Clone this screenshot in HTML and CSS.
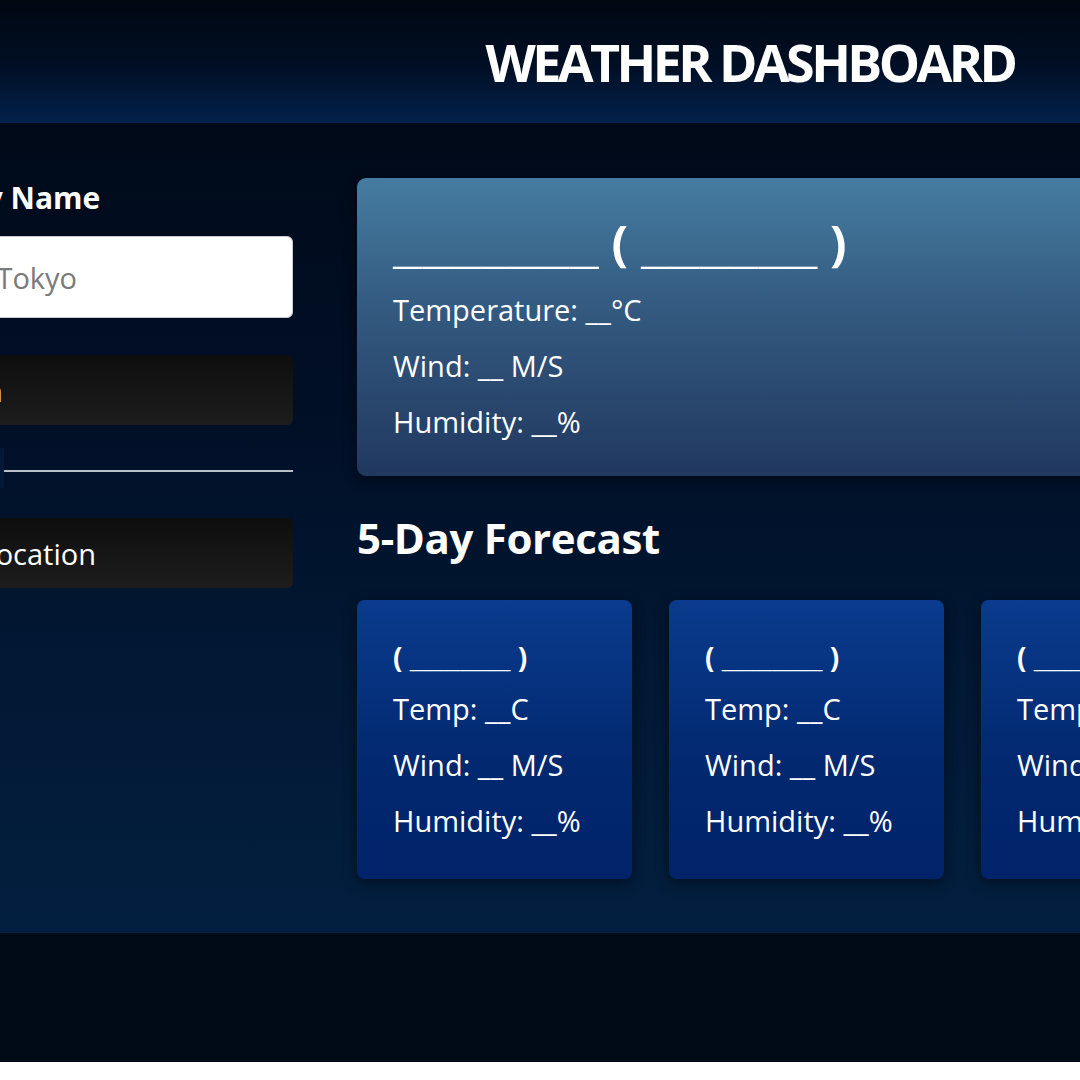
FILE: index.html
```html
<!DOCTYPE html>
<html lang="en">
<head>
<meta charset="utf-8">
<title>Weather Dashboard</title>
<link rel="stylesheet" href="styles.css">
</head>
<body>
<div class="screen">
  <header class="top-bar">
    <h1 class="title">WEATHER DASHBOARD</h1>
  </header>
  <main class="container">
    <aside class="weather-input">
      <h3 class="input-label">Enter a City Name</h3>
      <input class="city-input" type="text" placeholder="E.g., New York, London, Tokyo">
      <button class="btn search-btn">Search</button>
      <div class="separator"><span class="separator-text">or</span></div>
      <button class="btn location-btn">Use Current Location</button>
    </aside>
    <section class="weather-data">
      <div class="current-weather">
        <h2 class="city-title"><span class="blank">_______</span> ( <span class="blank">______</span> )</h2>
        <h6 class="stat stat-first">Temperature: __°C</h6>
        <h6 class="stat">Wind: __ M/S</h6>
        <h6 class="stat">Humidity: __%</h6>
      </div>
      <div class="days-forecast">
        <h2 class="forecast-title">5-Day Forecast</h2>
        <ul class="weather-cards">
          <li class="card">
            <h3 class="card-date">( <span class="blank-sm">______</span> )</h3>
            <h6 class="stat stat-card-first">Temp: __C</h6>
            <h6 class="stat">Wind: __ M/S</h6>
            <h6 class="stat">Humidity: __%</h6>
          </li>
          <li class="card">
            <h3 class="card-date">( <span class="blank-sm">______</span> )</h3>
            <h6 class="stat stat-card-first">Temp: __C</h6>
            <h6 class="stat">Wind: __ M/S</h6>
            <h6 class="stat">Humidity: __%</h6>
          </li>
          <li class="card">
            <h3 class="card-date">( <span class="blank-sm">______</span> )</h3>
            <h6 class="stat stat-card-first">Temp: __C</h6>
            <h6 class="stat">Wind: __ M/S</h6>
            <h6 class="stat">Humidity: __%</h6>
          </li>
          <li class="card">
            <h3 class="card-date">( <span class="blank-sm">______</span> )</h3>
            <h6 class="stat stat-card-first">Temp: __C</h6>
            <h6 class="stat">Wind: __ M/S</h6>
            <h6 class="stat">Humidity: __%</h6>
          </li>
          <li class="card">
            <h3 class="card-date">( <span class="blank-sm">______</span> )</h3>
            <h6 class="stat stat-card-first">Temp: __C</h6>
            <h6 class="stat">Wind: __ M/S</h6>
            <h6 class="stat">Humidity: __%</h6>
          </li>
        </ul>
      </div>
    </section>
  </main>
  <footer class="bottom-bar"></footer>
</div>
</body>
</html>
```
FILE: styles.css
```css
html, body {
  margin: 0;
  padding: 0;
  overflow: hidden;
}

body {
  background: #ffffff;
  font-family: "Open Sans", "Noto Sans", sans-serif;
  color: #ffffff;
  width: 1080px;
  height: 1080px;
}

.screen {
  width: 1080px;
  overflow: hidden;
}

.top-bar {
  width: 1500px;
  height: 123px;
  display: flex;
  align-items: center;
  justify-content: center;
  background: linear-gradient(180deg, #000711 0%, #010f25 55%, #03224c 100%);
}

.title {
  margin: 0;
  font-size: 52px;
  line-height: 1;
  font-weight: 700;
  letter-spacing: -3.6px;
  color: #ffffff;
}

.container {
  display: flex;
  gap: 64px;
  margin-left: -387px;
  height: 810px;
  box-sizing: border-box;
  padding-top: 55px;
  background: linear-gradient(180deg, #000a19 0%, #010f26 35%, #021a37 75%, #031f3f 100%);
}

.weather-input {
  width: 680px;
  flex-shrink: 0;
  display: flex;
  flex-direction: column;
}

.input-label {
  margin: 2px 0 0;
  padding-left: 24px;
  font-size: 30px;
  line-height: 36px;
  font-weight: 700;
  text-align: center;
}

.city-input {
  margin-top: 20px;
  height: 82px;
  box-sizing: border-box;
  border: 1px solid #c8ccd2;
  border-radius: 6px;
  padding: 0 30px 0 58px;
  font-family: inherit;
  font-size: 29px;
  color: #333;
  background: #ffffff;
  outline: none;
}

.city-input::placeholder {
  color: #7a7a7a;
}

.btn {
  height: 70px;
  border: none;
  border-radius: 6px;
  background: linear-gradient(180deg, #0e0e0e 0%, #1d1d1d 100%);
  color: #ffffff;
  font-family: inherit;
  font-size: 29px;
  cursor: pointer;
}

.search-btn {
  margin-top: 37px;
  padding-left: 14px;
}

.separator {
  margin: 45px 0 46px;
  height: 2px;
  background: #b9c0ca;
  display: flex;
  align-items: center;
  justify-content: center;
}

.separator-text {
  background: #03193a;
  color: #6c757d;
  font-size: 34px;
  line-height: 40px;
  padding: 0 34px;
  margin-top: -6px;
}

.weather-data {
  width: 1500px;
  flex-shrink: 0;
}

.current-weather {
  padding: 35px 36px 34px;
  border-radius: 9px;
  background: linear-gradient(180deg, #467ca1 0%, #33597f 45%, #213860 100%);
  box-shadow: 0 4px 14px rgba(0, 0, 0, 0.45);
}

.city-title {
  margin: 0;
  font-size: 49px;
  line-height: 59px;
  font-weight: 700;
}

.blank {
  font-family: "Liberation Mono", monospace;
  font-weight: 700;
  line-height: 0;
  position: relative;
  top: 3px;
}

.blank-sm {
  font-family: "Liberation Mono", monospace;
  font-weight: 700;
  line-height: 0;
}

.stat {
  margin: 16px 0 0;
  font-size: 29px;
  line-height: 40px;
  font-weight: 500;
}

.stat-first {
  margin-top: 18px;
}

.forecast-title {
  margin: 37px 0 37px;
  font-size: 42px;
  line-height: 50px;
  font-weight: 700;
  letter-spacing: -0.35px;
}

.weather-cards {
  list-style: none;
  margin: 0;
  padding: 0;
  display: flex;
  gap: 37px;
}

.card {
  width: 275px;
  flex-shrink: 0;
  box-sizing: border-box;
  padding: 40px 36px 38px;
  border-radius: 8px;
  background: linear-gradient(180deg, #0a3b8d 0%, #02286f 60%, #01236a 100%);
  box-shadow: 0 4px 14px rgba(0, 0, 0, 0.45);
}

.card-date {
  margin: 0;
  font-size: 28px;
  line-height: 34px;
  font-weight: 700;
}

.stat-card-first {
  margin-top: 15px;
}

.bottom-bar {
  height: 129px;
  background: #000b18;
}
```
